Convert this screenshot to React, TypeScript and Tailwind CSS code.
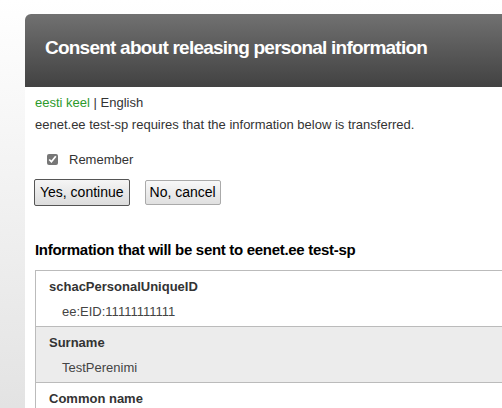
import React from 'react';

const rows = [
  { name: 'schacPersonalUniqueID', value: 'ee:EID:11111111111' },
  { name: 'Surname', value: 'TestPerenimi' },
  { name: 'Common name', value: '' },
];

const App: React.FC = () => {
  return (
    <div
      className="w-[502px] h-[408px] overflow-hidden bg-gradient-to-b from-white to-[#e3e3e3] pt-[14px] pl-[25px]"
      style={{ fontFamily: '"Liberation Sans", Arial, sans-serif' }}
    >
      <div className="w-[520px] h-[420px] bg-white rounded-tl-[6px] overflow-hidden">
        <div className="h-[73px] bg-gradient-to-b from-[#717171] to-[#424242] pt-[24px] pl-[20px]">
          <h1 className="text-white font-bold text-[19px] leading-[19px] tracking-[-0.77px]">
            Consent about releasing personal information
          </h1>
        </div>
        <div className="pl-[10px] text-[13px] leading-[13px] text-[#333]">
          <p className="mt-[9px]">
            <span className="text-[#2c9a2c]">eesti keel</span> | English
          </p>
          <p className="mt-[9px]">eenet.ee test-sp requires that the information below is transferred.</p>
          <label className="flex items-center mt-[22px] ml-[12px] gap-[11px]">
            <input type="checkbox" defaultChecked className="w-[11px] h-[11px] m-0 accent-[#777]" />
            <span>Remember</span>
          </label>
          <div className="flex items-center gap-[15px] mt-[13px] -ml-[1px]">
            <button className="h-[27px] px-[5px] text-[14px] text-black bg-gradient-to-b from-[#f5f5f5] to-[#dcdcdc] border border-[#555] rounded-[2px]">
              Yes, continue
            </button>
            <button className="h-[25px] px-[4px] text-[14px] text-black bg-gradient-to-b from-[#f8f8f8] to-[#e0e0e0] border border-[#aaa] rounded-[2px]">
              No, cancel
            </button>
          </div>
          <h2 className="mt-[36px] font-bold text-[15px] leading-[15px] tracking-[-0.3px] text-black">
            Information that will be sent to eenet.ee test-sp
          </h2>
          <div className="mt-[13px] border-l border-t border-[#bbb]">
            {rows.map((r, i) => (
              <div
                key={r.name}
                className={`h-[56px] border-b border-[#bbb] pl-[13px] pt-[9px] ${i % 2 === 1 ? 'bg-[#ececec]' : 'bg-white'}`}
              >
                <div className="font-bold text-[13px] leading-[13px] text-[#333]">{r.name}</div>
                <div className="mt-[12px] pl-[13px] text-[13px] leading-[13px] text-[#444]">{r.value}</div>
              </div>
            ))}
          </div>
        </div>
      </div>
    </div>
  );
};

export default App;
